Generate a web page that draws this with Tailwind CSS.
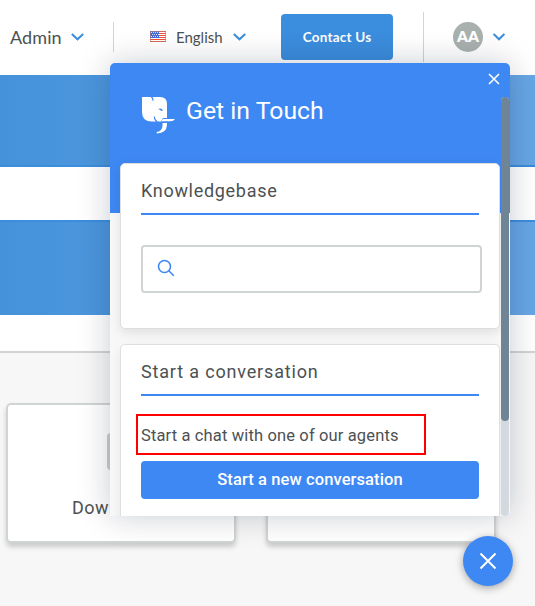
<!DOCTYPE html>
<html lang="en">
<head>
<meta charset="utf-8">
<title>Get in Touch</title>
<script src="https://cdn.jsdelivr.net/npm/@tailwindcss/browser@4"></script>
</head>
<body class="relative h-[606px] w-[535px] overflow-hidden bg-[#f7f7f7] font-['Lato',sans-serif] text-[#4c5152]">
<header class="flex h-[75px] items-start bg-white">
  <span class="ml-[10px] mt-[24px] w-[61px] whitespace-nowrap text-[18px] leading-[26px] tracking-[.1px]">Admin</span>
  <svg class="mt-[33px] h-2 w-[13px]" viewBox="0 0 13 8" fill="none" stroke="#3b8ddd" stroke-width="2"><path d="M.8 .9 6.5 6.3 12.2 .9"/></svg>
  <div class="ml-[29px] mt-[22px] h-[30px] w-px bg-[#cfd4d4]"></div>
  <svg class="ml-[36px] mt-[31px] h-[11px] w-4" viewBox="0 0 16 11"><path fill="#fff" d="M0 0h16v11H0z"/><path stroke="#f0503c" d="M0 .5h16M0 2.5h16M0 4.5h16M0 6.5h16M0 8.5h16M0 10.5h16"/><path fill="#4169dc" d="M0 0h9v7H0z"/><path stroke="#dbe5ff" stroke-dasharray="1 1" d="M1 1.5h8M2 3.5h7M1 5.5h8"/><path fill="none" stroke="#c07b6c" stroke-opacity=".6" d="M.5 .5h15v10H.5z"/></svg>
  <span class="ml-[10px] mt-[25px] w-[57px] whitespace-nowrap text-[15px] leading-6">English</span>
  <svg class="mt-[33px] h-2 w-[13px]" viewBox="0 0 13 8" fill="none" stroke="#3b8ddd" stroke-width="2"><path d="M.8 .9 6.5 6.3 12.2 .9"/></svg>
  <button class="ml-[35px] mt-[14px] h-[46px] w-[112px] rounded bg-[#3b8ddd] pt-px text-[13.5px] font-bold tracking-[.22px] text-white">Contact Us</button>
  <div class="ml-[30px] mt-3 h-[50px] w-px bg-[#cfd4d4]"></div>
  <div class="ml-[29px] mt-[22px] flex size-[30px] items-center justify-center rounded-full bg-[#a9b1af] text-[15.5px] font-extrabold text-white">AA</div>
  <svg class="ml-[10px] mt-[33px] h-2 w-3" viewBox="0 0 12 8" fill="none" stroke="#3b8ddd" stroke-width="2"><path d="M.6 .9 6 6.3 11.4 .9"/></svg>
</header>
<div class="h-[92px] border-b-2 border-[#3b8ddd] bg-linear-to-r from-[#4592db] to-[#67a6e5]"></div>
<div class="h-[53px] bg-white"></div>
<div class="h-[95px] border-t-2 border-[#3b8ddd] bg-linear-to-r from-[#4592db] to-[#67a6e5]"></div>
<div class="h-[38px] border-b-2 border-[#d0d4d4] bg-white"></div>
<div class="flex gap-[30px] pl-[6px] pt-[50px]">
  <div class="h-[140px] w-[230px] shrink-0 rounded-[5px] border-2 border-[#d0d4d4] bg-white pl-[64px] pt-7 shadow-[0_4px_5px_rgba(0,0,0,0.18)]">
    <div class="ml-[35px] h-[37px] w-[30px] rounded bg-[#cbcfd1]"></div>
    <div class="mt-[24px] font-['Roboto',sans-serif] text-[18px] leading-7 tracking-[.5px]">Downloads</div>
  </div>
  <div class="h-[140px] w-[230px] shrink-0 rounded-[5px] border-2 border-[#d0d4d4] bg-white shadow-[0_4px_5px_rgba(0,0,0,0.18)]"></div>
</div>

<section class="absolute left-[110px] top-[63px] h-[453px] w-[400px] rounded-t-[5px] rounded-br-[5px] font-['Roboto',sans-serif] shadow-[0_0_32px_rgba(0,18,46,0.22)]">
  <div class="h-full overflow-hidden rounded-t-[5px] rounded-br-[5px] bg-[linear-gradient(#3e88f3_150px,#f8f8f8_150px)]">
    <div class="flex h-[100px] pl-8">
      <svg class="mt-[34px] h-[37px] w-[33px]" viewBox="0 0 33 37" fill="#fff"><path d="M0 0H18Q25 0 25 7V21H21L19 24.5H9Q0 24 0 15Z"/><path fill="none" stroke="#3e88f3" stroke-width="1.1" d="M9 -.5Q11 .5 11 3.8M12.3 19.500Q12.300 23 15.500 25"/><path fill="#3e88f3" d="M16 12Q18 10.800 20 12L20.800 14Q18.500 14 18 12.800Z"/><path d="M21 22H33Q31.500 24.300 28.500 24.300H19ZM20.500 26H25V28Q24.500 36 15 36.500L14.500 35Q20 34.500 20.500 29Z"/></svg>
      <h1 class="ml-[11px] mt-[31px] whitespace-nowrap text-[24.800px] leading-[34px] text-white">Get in Touch</h1>
      <svg class="ml-auto mr-[10px] mt-[10px] size-3" viewBox="0 0 12 12" stroke="#fff" stroke-width="1.6"><path d="M1 1 11 11M11 1 1 11"/></svg>
    </div>
    <div class="ml-[10px] h-[166px] w-[380px] rounded-[5px] border border-[#dddfdf] bg-white px-5 pt-[11px] shadow-[0_4px_12px_rgba(0,0,0,0.10)]">
      <h2 class="h-10 w-[338px] border-b-2 border-[#3e88f3] text-[18px] leading-[31px] tracking-[.7px]">Knowledgebase</h2>
      <div class="mt-[30px] h-12 w-[341px] rounded border-2 border-[#d0d5d4] bg-white pl-[14px] pt-[12px]">
        <svg class="h-[18px] w-[18px]" viewBox="0 0 18 18" fill="none" stroke="#3e88f3" stroke-width="1.6"><circle cx="7.5" cy="7.5" r="6"/><path d="m11.8 11.8 5 5"/></svg>
      </div>
    </div>
    <div class="ml-[10px] mt-[15px] h-[190px] w-[380px] rounded-t-[5px] border border-[#dddfdf] bg-white px-5 pt-[11px] shadow-[0_4px_12px_rgba(0,0,0,0.08)]">
      <h2 class="h-10 w-[338px] whitespace-nowrap border-b-2 border-[#3e88f3] text-[18px] leading-[31px] tracking-[.83px]">Start a conversation</h2>
      <p class="-ml-[5px] mt-[18px] h-[41px] w-[290px] whitespace-nowrap border-2 border-[#ff0000] pl-[3px] text-[16.500px] leading-[39px] tracking-[.14px]">Start a chat with one of our agents</p>
      <button class="mt-[6px] h-[38px] w-[338px] rounded bg-[#3e88f3] text-[16.500px] font-medium tracking-[.1px] text-white">Start a new conversation</button>
    </div>
  </div>
  <div class="absolute left-[391px] top-[34px] h-[419px] w-2 rounded-full bg-[#d2dae0]">
    <div class="h-[324px] rounded-full bg-[#6f8495]"></div>
  </div>
</section>
<button class="absolute left-[463px] top-[536px] flex size-[50px] items-center justify-center rounded-full bg-[#3e88f3] shadow-[0_2px_8px_rgba(0,0,0,0.35)]">
  <svg class="size-[18px]" viewBox="0 0 18 18" stroke="#fff" stroke-width="2"><path d="M1.500 1.500 16.500 16.500M16.500 1.500 1.500 16.500"/></svg>
</button>
</body>
</html>
